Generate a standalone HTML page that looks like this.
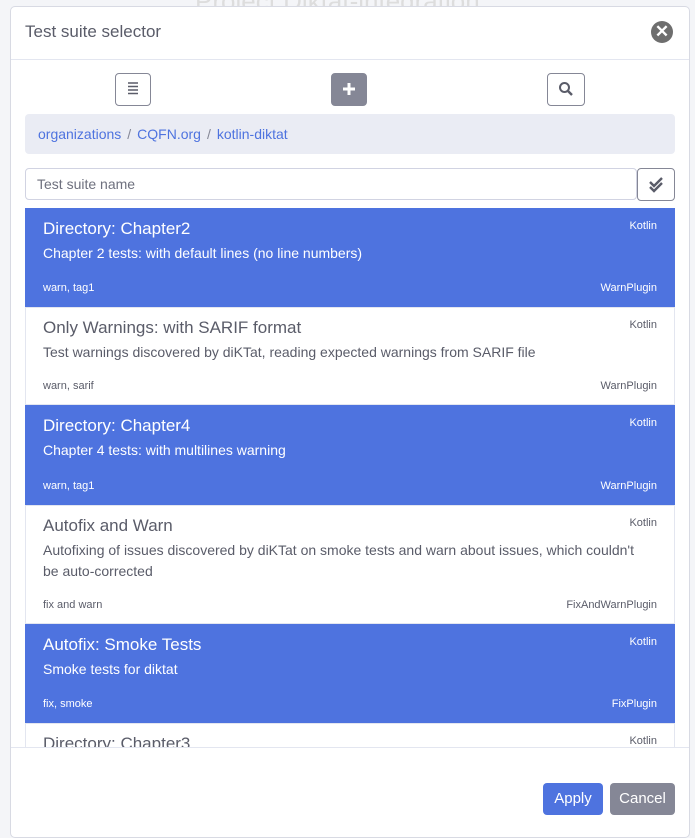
<!DOCTYPE html><html><head><style>
body{margin:0;width:695px;height:827px;overflow:hidden;background:#f4f5f8;font-family:"Liberation Sans",sans-serif;position:relative}
.bgt{position:absolute;left:195px;top:-14px;font-size:26px;color:#ddd}
.modal{position:absolute;left:10px;top:6px;width:678px;height:830px;background:#fff;border:1px solid #d8dae3;border-radius:5px}
.hd{height:52px;border-bottom:1px solid #e3e6f0;position:relative}
.hd span{position:absolute;left:14px;top:15px;font-size:17px;color:#5a5c69}
.x{position:absolute;left:640px;top:14px;width:22px;height:22px;border-radius:50%;background:#6e6e6e;color:#fff;font-size:17px;font-weight:bold;text-align:center;line-height:22px}
.tb{position:absolute;top:66px;width:36px;height:33px;border:1px solid #858796;border-radius:4px;box-sizing:border-box;text-align:center;color:#5a5c69}
.bc{position:absolute;left:14px;top:107px;width:650px;height:40px;background:#eaecf4;border-radius:4px;font-size:14px;color:#4e73df;line-height:40px;padding-left:13px;box-sizing:border-box}
.bc i{font-style:normal;color:#858796;margin:0 6px}
.inp{position:absolute;left:14px;top:161px;width:612px;height:32px;border:1px solid #d1d3e2;border-radius:4px;box-sizing:border-box;font-size:14px;color:#6e707e;padding:7px 11px}
.chk{position:absolute;left:626px;top:161px;width:38px;height:33px;border:1px solid #858796;border-radius:4px;box-sizing:border-box}
.list{position:absolute;left:14px;top:201px;width:650px;height:540px;overflow:hidden}
.it{position:relative;border:1px solid #e3e6f0;box-sizing:border-box;color:#5a5c69;background:#fff}
.it.a{background:#4e73df;color:#fff;border-color:#4e73df}
.t{position:absolute;left:17px;top:10px;font-size:17px}
.d{position:absolute;left:17px;top:34px;font-size:14px;line-height:21px;width:610px}
.k{position:absolute;right:17px;top:11px;font-size:11px}
.tg{position:absolute;left:17px;bottom:12px;font-size:11px}
.pl{position:absolute;right:17px;bottom:12px;font-size:11px}
.ft{position:absolute;left:0;top:740px;width:678px;border-top:1px solid #e3e6f0}
.btn{position:absolute;top:776px;height:32px;border-radius:4px;color:#fff;font-size:15px;line-height:32px;text-align:center}
</style></head><body>
<div class="bgt">Project Diktat-integration</div>
<div class="modal">
<div class="hd"><span>Test suite selector</span><div class="x">✕</div></div>
<div class="tb" style="left:104px"><svg width="16" height="16" viewBox="0 0 16 16" style="margin-top:7px"><path d="M3 2h10M3 5.5h10M3 9h10M3 12.5h10" stroke="#5a5c69" stroke-width="1.6"/></svg></div>
<div class="tb" style="left:320px;background:#858796;border-color:#858796"><svg width="16" height="16" viewBox="0 0 16 16" style="margin-top:7px"><path d="M8 2v12M2 8h12" stroke="#fff" stroke-width="3"/></svg></div>
<div class="tb" style="left:536px;width:38px"><svg width="16" height="16" viewBox="0 0 16 16" style="margin-top:7px"><circle cx="6.5" cy="6.5" r="4.5" fill="none" stroke="#5a5c69" stroke-width="2"/><path d="M10 10l4 4" stroke="#5a5c69" stroke-width="2.4"/></svg></div>
<div class="bc">organizations<i>/</i>CQFN.org<i>/</i>kotlin-diktat</div>
<div class="inp">Test suite name</div>
<div class="chk"><svg width="18" height="16" viewBox="0 0 18 16" style="margin:8px 0 0 10px"><path d="M2 5l4 4 8-8M2 10l4 4 8-8" fill="none" stroke="#5a5c69" stroke-width="2.4"/></svg></div>
<div class="list">
<div class="it a" style="height:99px"><div class="t">Directory: Chapter2</div><div class="k">Kotlin</div><div class="d">Chapter 2 tests: with default lines (no line numbers)</div><div class="tg">warn, tag1</div><div class="pl">WarnPlugin</div></div>
<div class="it" style="height:98px"><div class="t">Only Warnings: with SARIF format</div><div class="k">Kotlin</div><div class="d">Test warnings discovered by diKTat, reading expected warnings from SARIF file</div><div class="tg">warn, sarif</div><div class="pl">WarnPlugin</div></div>
<div class="it a" style="height:100px"><div class="t">Directory: Chapter4</div><div class="k">Kotlin</div><div class="d">Chapter 4 tests: with multilines warning</div><div class="tg">warn, tag1</div><div class="pl">WarnPlugin</div></div>
<div class="it" style="height:119px"><div class="t">Autofix and Warn</div><div class="k">Kotlin</div><div class="d">Autofixing of issues discovered by diKTat on smoke tests and warn about issues, which couldn't be auto-corrected</div><div class="tg">fix and warn</div><div class="pl">FixAndWarnPlugin</div></div>
<div class="it a" style="height:99px"><div class="t">Autofix: Smoke Tests</div><div class="k">Kotlin</div><div class="d">Smoke tests for diktat</div><div class="tg">fix, smoke</div><div class="pl">FixPlugin</div></div>
<div class="it" style="height:99px"><div class="t">Directory: Chapter3</div><div class="k">Kotlin</div></div>
</div>
<div class="ft"></div>
<div class="btn" style="left:532px;width:60px;background:#4e73df">Apply</div>
<div class="btn" style="left:599px;width:65px;background:#858796">Cancel</div>
</div>
</body></html>
